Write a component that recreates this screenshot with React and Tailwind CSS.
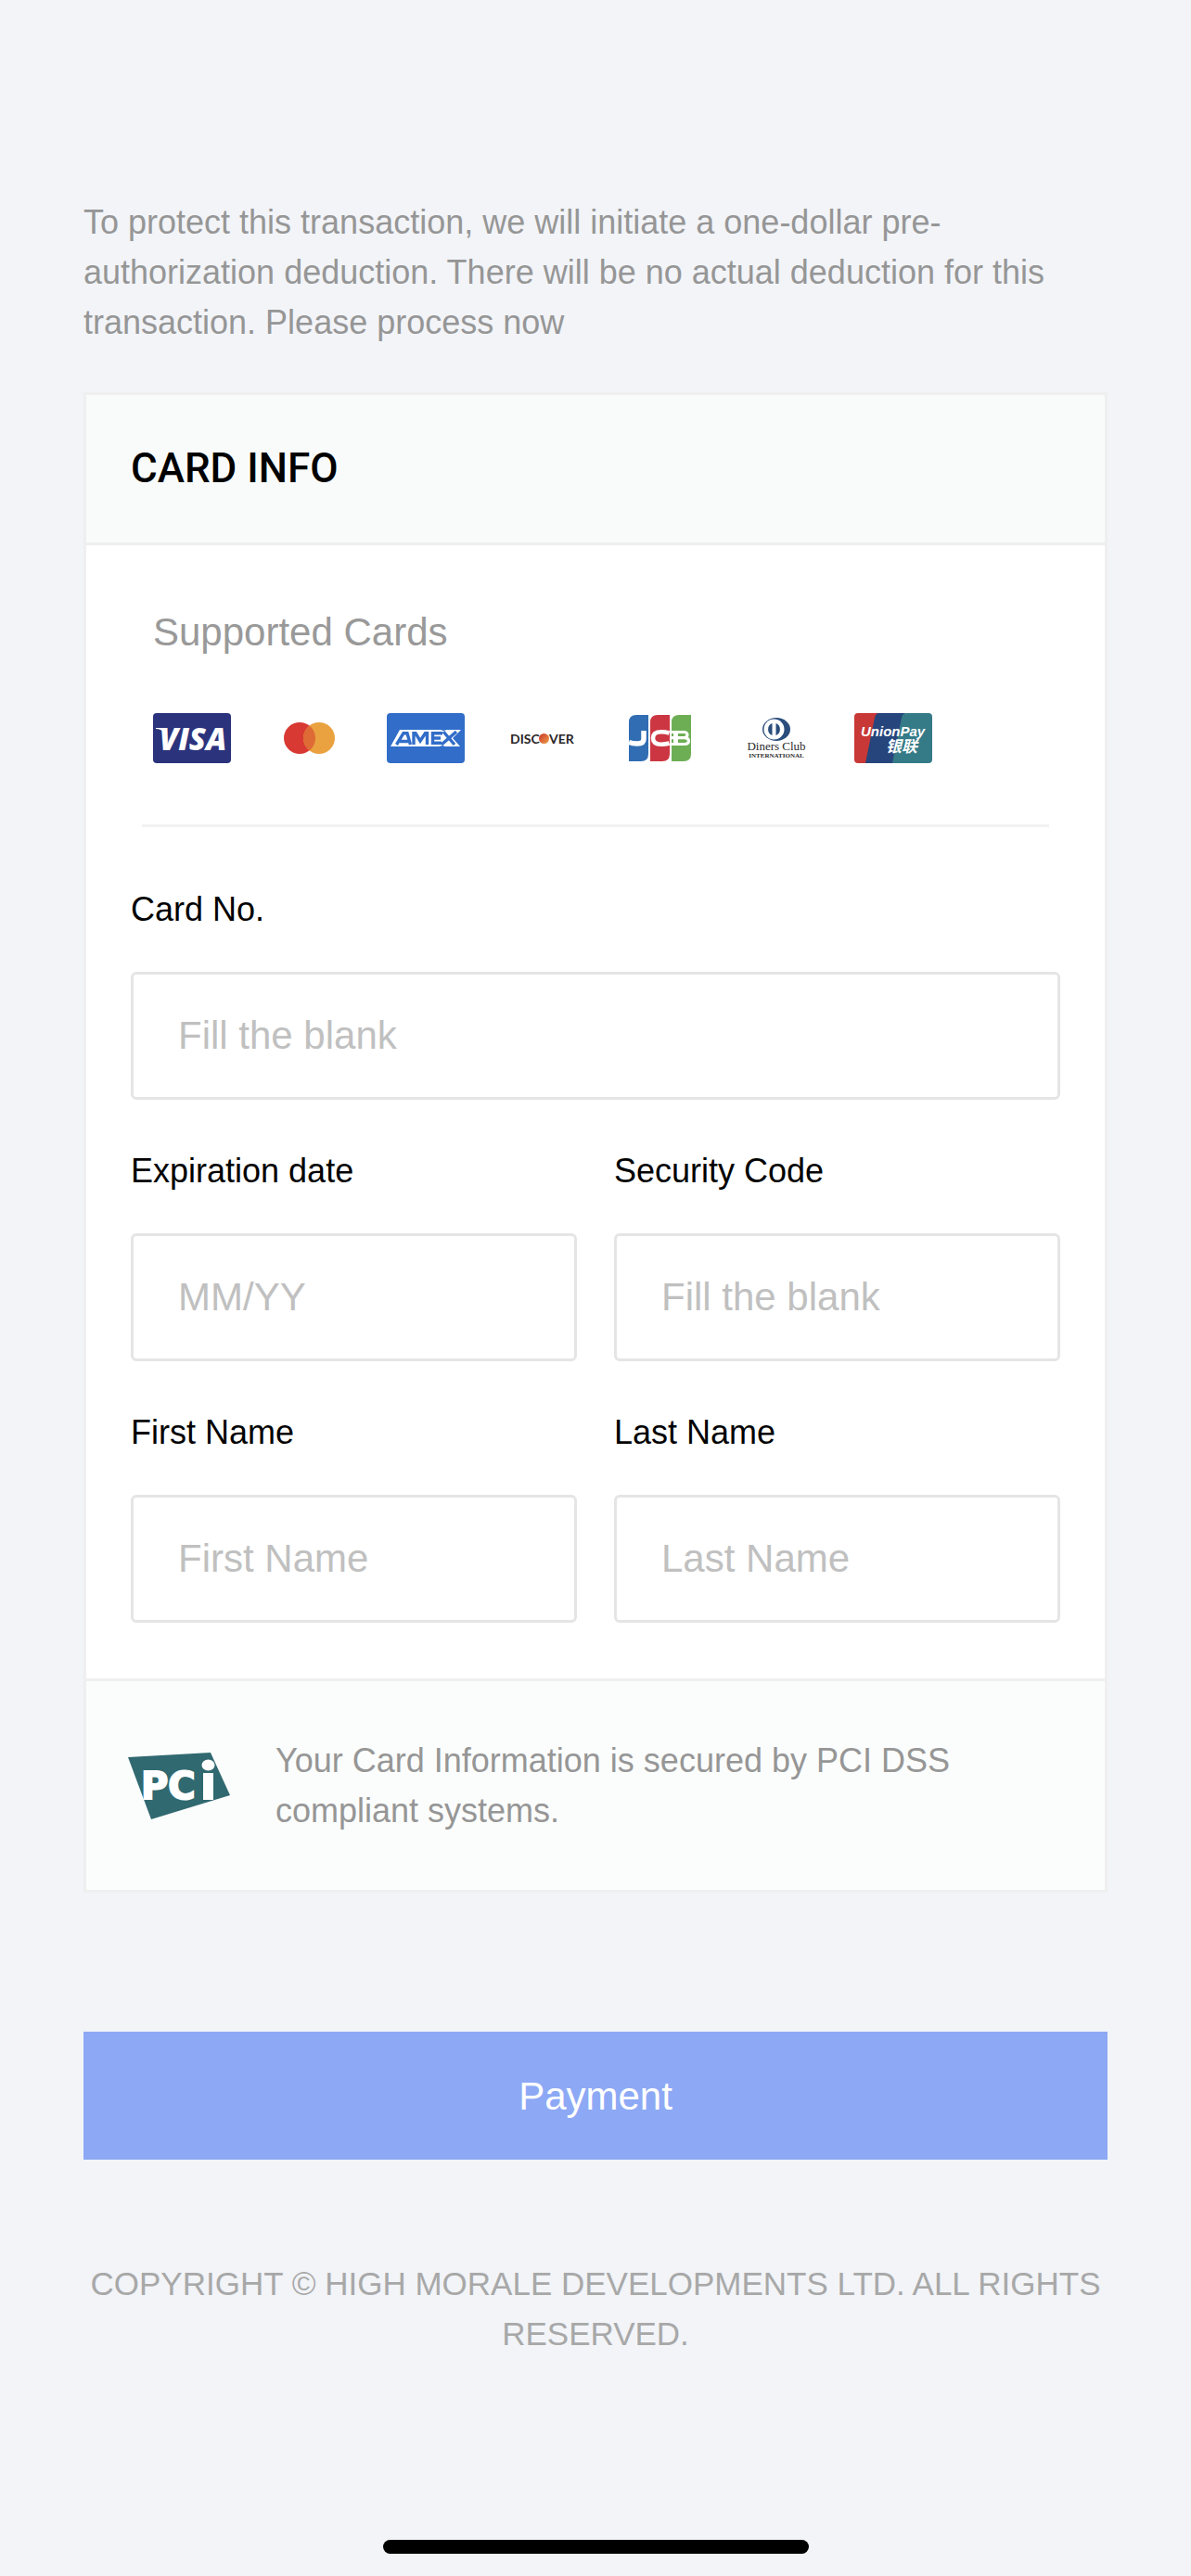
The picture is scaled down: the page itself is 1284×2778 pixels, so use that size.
import React, { useState } from "react";

function Visa() {
  return (
    <svg viewBox="0 0 84 54" className="w-[84px] h-[54px]" role="img" aria-label="Visa">
      <rect width="84" height="54" rx="4" fill="#2b337c" />
      <path d="M3 16h9l3 5-2 1Q9 17 3 17Z" fill="#fff" />
      <text x="43" y="40" textAnchor="middle" fontSize="33" fontWeight="800" fontStyle="italic" fill="#fff" fontFamily="'Open Sans', sans-serif">
        VISA
      </text>
    </svg>
  );
}

function Mastercard() {
  return (
    <svg viewBox="0 0 84 54" className="w-[84px] h-[54px]" role="img" aria-label="Mastercard">
      <circle cx="32" cy="27" r="17" fill="#d83933" />
      <circle cx="53" cy="27" r="17" fill="#e9a23f" />
      <path d="M42.500 13.600a17 17 0 0 1 0 26.800a17 17 0 0 1 0-26.800Z" fill="#de6a36" />
    </svg>
  );
}

function Amex() {
  return (
    <svg viewBox="0 0 84 54" className="w-[84px] h-[54px]" role="img" aria-label="American Express">
      <rect width="84" height="54" rx="4" fill="#316dc9" />
      <path d="M14 18h44l3 1 4-1h15L71 27l8 9H63l-3-1-4 1H4Z" fill="#fff" />
      <g fill="none" stroke="#316dc9" strokeWidth="3.400">
        <path d="M10.500 34 18 21.700H22L25.500 34M14 30.500H25" />
        <path d="M29 34V21.700H31L36 30 41.500 21.700H43.500V34" />
        <path d="M60 21.700H49.500V32.300H59M49.500 27H58" />
        <path d="M59 34 75 20M61 20 73 34" />
      </g>
    </svg>
  );
}

function Discover() {
  return (
    <svg viewBox="0 0 84 54" className="w-[84px] h-[54px]" role="img" aria-label="Discover">
      <defs>
        <linearGradient id="discover-dot" x1="0" y1="0" x2="1" y2="1">
          <stop offset="0.2" stopColor="#d0492f" />
          <stop offset="1" stopColor="#efa04b" />
        </linearGradient>
      </defs>
      <g fontSize="14" fontWeight="700" fill="#2a2626" fontFamily="Lato, sans-serif">
        <text x="7" y="33">DISC</text>
        <text x="49" y="33">VER</text>
      </g>
      <circle cx="43.500" cy="27.500" r="5.500" fill="url(#discover-dot)" />
    </svg>
  );
}

function Jcb() {
  return (
    <svg viewBox="0 0 84 54" className="w-[84px] h-[54px]" role="img" aria-label="JCB">
      <path d="M9 10q0-8 8-8h13v42q0 8-8 8H9Z" fill="#316db3" />
      <path d="M32 10q0-8 8-8h13v42q0 8-8 8H32Z" fill="#cc3642" />
      <path d="M55 10q0-8 8-8h13v42q0 8-8 8H55Z" fill="#6dae54" />
      <g fill="none" stroke="#fff">
        <path d="M25 19v9q0 5-7 5-5 0-9-1.500" strokeWidth="5.500" />
        <path d="M52.500 21.500q-4-1.200-8.500-1.200-9 0-9 6.700t9 6.700q4.500 0 8.500-1.200" strokeWidth="4.500" />
        <path d="M55 20.500H68q4 0 4 3t-4 3.200H55M55 33.500H69q4.500 0 4.500-3.200T69 26.700" strokeWidth="3.200" />
        <path d="M59.500 19v16" strokeWidth="5" />
      </g>
    </svg>
  );
}

function DinersClub() {
  return (
    <svg viewBox="0 0 84 54" className="w-[84px] h-[54px]" role="img" aria-label="Diners Club International">
      <ellipse cx="42" cy="17.500" rx="15" ry="12.500" fill="#2a4d7c" />
      <circle cx="39.500" cy="17.500" r="11" fill="#fff" />
      <path d="M37.500 11v13a7 7 0 0 1 0-13ZM41.500 11v13a7 7 0 0 0 0-13Z" fill="#2a4d7c" />
      <g fill="#2b2b2b" textAnchor="middle" fontFamily="'Liberation Serif', serif">
        <text x="42" y="40" fontSize="13">Diners Club</text>
        <text x="42" y="48" fontSize="7" fontWeight="700">INTERNATIONAL</text>
      </g>
    </svg>
  );
}

function UnionPay() {
  return (
    <svg viewBox="0 0 84 54" className="w-[84px] h-[54px]" role="img" aria-label="UnionPay">
      <path d="M4 0h26L14 54H4q-4 0-4-4V4q0-4 4-4Z" fill="#c83836" />
      <path d="M27 0h28L42 54H12L22 5q1-5 5-5Z" fill="#26457c" />
      <path d="M57 0h23q4 0 4 4v46q0 4-4 4H41L51 5q1-5 6-5Z" fill="#357b87" />
      <g fill="#fff" fontWeight="700" fontStyle="italic">
        <text x="7" y="25" fontSize="15" fontFamily="'Liberation Sans', sans-serif">
          UnionPay
        </text>
        <text x="34" y="42" fontSize="17" fontFamily="'Noto Sans CJK SC', sans-serif">
          银联
        </text>
      </g>
    </svg>
  );
}

function PciLogo() {
  return (
    <svg viewBox="0 0 111 72" className="w-[111px] h-[72px] shrink-0" role="img" aria-label="PCI">
      <path d="M0 5 89 0l21 46-85 26Z" fill="#316970" />
      <text
        x="14"
        y="50"
        fontSize="40"
        fontWeight="700"
        fill="#fff"
        stroke="#fff"
        strokeWidth="2"
        fontFamily="'DejaVu Sans', sans-serif"
      >
        PC
      </text>
      <path d="M81 22h11v29H81Z" fill="#fff" />
      <ellipse cx="86.500" cy="13.500" rx="7" ry="6" fill="#fff" />
    </svg>
  );
}

function Field({ id, label, placeholder, className, value, onChange }) {
  return (
    <div className={className}>
      <label htmlFor={id} className="block text-[36px] leading-[54px] text-black">
        {label}
      </label>
      <input
        id={id}
        name={id}
        type="text"
        placeholder={placeholder}
        value={value}
        onChange={onChange}
        className="mt-10 block h-[138px] w-full rounded-md border-3 border-[#e5e5e5] bg-white px-12 text-[42px] text-black placeholder:text-[#c0c0c0] outline-none focus:border-[#8da9f5]"
      />
    </div>
  );
}

const fields = [
  { id: "cardNo", label: "Card No.", placeholder: "Fill the blank", className: "col-span-2" },
  { id: "expiration", label: "Expiration date", placeholder: "MM/YY" },
  { id: "securityCode", label: "Security Code", placeholder: "Fill the blank" },
  { id: "firstName", label: "First Name", placeholder: "First Name" },
  { id: "lastName", label: "Last Name", placeholder: "Last Name" },
];

export default function App() {
  const [form, setForm] = useState({});

  const handleChange = (e) => {
    setForm({ ...form, [e.target.name]: e.target.value });
  };

  const handleSubmit = (e) => {
    e.preventDefault();
  };

  return (
    <div className="flex min-h-screen flex-col bg-[#f2f4f8] px-[90px] pt-[213px] pb-6 font-['Liberation_Sans',Arial,sans-serif]">
      <p className="text-[36px] leading-[54px] text-[#969696]">
        To protect this transaction, we will initiate a one-dollar pre-authorization deduction. There
        will be no actual deduction for this transaction. Please process now
      </p>

      <form onSubmit={handleSubmit}>
        <div className="mt-12 border-3 border-[#efefef] bg-white">
          <h2 className="border-b-3 border-[#efefef] bg-[#f9fbfa] px-12 py-12 font-[Roboto,sans-serif] text-[44px] leading-[63px] font-medium text-black">
            CARD INFO
          </h2>

          <div className="px-12 pt-[61px] pb-[60px]">
            <div className="px-6">
              <p className="text-[42px] leading-[66px] text-[#999999]">Supported Cards</p>
              <div className="mt-[54px] flex flex-wrap gap-[42px]">
                <Visa />
                <Mastercard />
                <Amex />
                <Discover />
                <Jcb />
                <DinersClub />
                <UnionPay />
              </div>
            </div>

            <hr className="mx-3 mt-[66px] border-t-3 border-[#f2f2f2]" />

            <div className="mt-[62px] grid grid-cols-2 gap-x-10 gap-y-[50px]">
              {fields.map((field) => (
                <Field key={field.id} {...field} value={form[field.id] || ""} onChange={handleChange} />
              ))}
            </div>
          </div>

          <div className="flex items-center gap-12 border-t-3 border-[#efefef] bg-[#fbfdfc] px-[45px] pt-[59px] pb-[58px]">
            <PciLogo />
            <p className="text-[36px] leading-[54px] text-[#969696]">
              Your Card Information is secured by PCI DSS compliant systems.
            </p>
          </div>
        </div>

        <button
          type="submit"
          className="mt-[150px] block h-[138px] w-full bg-[#8da9f5] text-center text-[42px] text-white"
        >
          Payment
        </button>
      </form>

      <footer className="mt-[107px] text-center text-[35px] leading-[54px] text-[#a8a8a8]">
        COPYRIGHT © HIGH MORALE DEVELOPMENTS LTD. ALL RIGHTS RESERVED.
      </footer>

      <div className="mx-auto mt-auto h-[15px] w-[459px] rounded-full bg-black" />
    </div>
  );
}
